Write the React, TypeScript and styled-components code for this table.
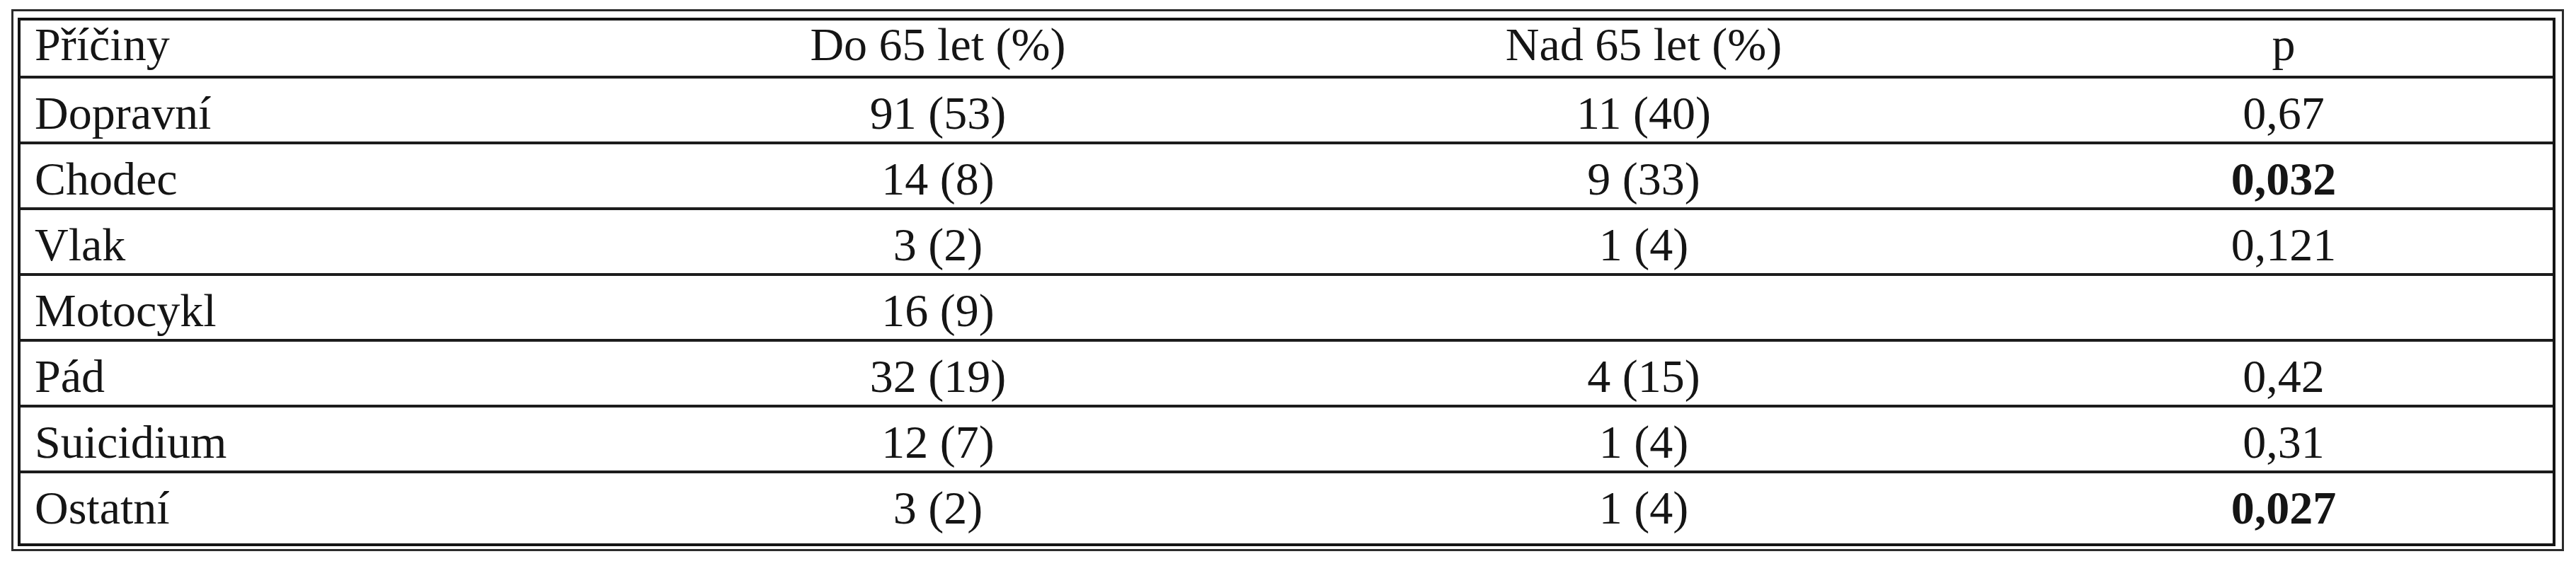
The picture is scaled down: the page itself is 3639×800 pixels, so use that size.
import React from 'react'
import styled, { createGlobalStyle } from 'styled-components'

type Row = {
  cause: string,
  under: string,
  over: string,
  p: string,
  significant?: boolean
}

const rows: Row[] = [
  { cause: 'Dopravní', under: '91 (53)', over: '11 (40)', p: '0,67' },
  { cause: 'Chodec', under: '14 (8)', over: '9 (33)', p: '0,032', significant: true },
  { cause: 'Vlak', under: '3 (2)', over: '1 (4)', p: '0,121' },
  { cause: 'Motocykl', under: '16 (9)', over: '', p: '' },
  { cause: 'Pád', under: '32 (19)', over: '4 (15)', p: '0,42' },
  { cause: 'Suicidium', under: '12 (7)', over: '1 (4)', p: '0,31' },
  { cause: 'Ostatní', under: '3 (2)', over: '1 (4)', p: '0,027', significant: true }
]

const GlobalStyle = createGlobalStyle`
  html, body {
    margin: 0;
    padding: 0;
    background: #ffffff;
  }
`

export const App = () => {
  return (
    <>
      <GlobalStyle />
      <Frame>
        <Table>
          <colgroup>
            <col style={{ width: 823 }} />
            <col style={{ width: 946 }} />
            <col style={{ width: 1048 }} />
            <col style={{ width: 760 }} />
          </colgroup>
          <thead>
            <tr>
              <HeadCell>Příčiny</HeadCell>
              <HeadCell $center>Do 65 let (%)</HeadCell>
              <HeadCell $center>Nad 65 let (%)</HeadCell>
              <HeadCell $center>p</HeadCell>
            </tr>
          </thead>
          <tbody>
            {rows.map((row) => (
              <BodyRow key={row.cause}>
                <Cell>{row.cause}</Cell>
                <Cell $center>{row.under}</Cell>
                <Cell $center>{row.over}</Cell>
                <Cell $center $bold={row.significant}>{row.p}</Cell>
              </BodyRow>
            ))}
          </tbody>
        </Table>
      </Frame>
    </>
  )
}

export default App

const Frame = styled.div`
  box-sizing: border-box;
  width: 3606px;
  margin: 13px 0 0 16px;
  padding: 9px 9px 4px 6px;
  border: 3px solid #2b2b2b;
`

const Table = styled.table`
  width: 3585px;
  table-layout: fixed;
  border-collapse: separate;
  border-spacing: 0;
  border: 4px solid #141414;
  font-family: "Liberation Serif", "Times New Roman", serif;
  font-size: 66px;
  line-height: 66px;
  color: #151515;
`

const HeadCell = styled.th<{ $center?: boolean }>`
  padding: 1px 0 11px ${p => (p.$center ? '0' : '20px')};
  font-weight: normal;
  text-align: ${p => (p.$center ? 'center' : 'left')};
  border-bottom: 4px solid #1c1c1c;
  white-space: nowrap;
`

const Cell = styled.td<{ $center?: boolean, $bold?: boolean }>`
  padding: 16px 0 7px ${p => (p.$center ? '0' : '20px')};
  text-align: ${p => (p.$center ? 'center' : 'left')};
  font-weight: ${p => (p.$bold ? 'bold' : 'normal')};
  border-bottom: 4px solid #1c1c1c;
  white-space: nowrap;
`

const BodyRow = styled.tr`
  &:last-child ${Cell} {
    border-bottom: none;
    padding-bottom: 17px;
  }
`
